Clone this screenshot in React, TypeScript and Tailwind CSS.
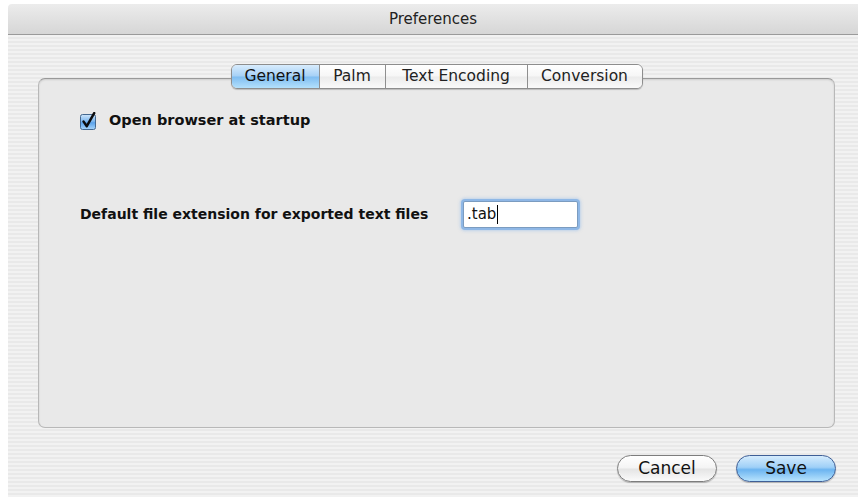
import React from "react";

const font = { fontFamily: '"DejaVu Sans", "Liberation Sans", sans-serif' };

function AquaCheck() {
  return (
    <svg width="17" height="18" viewBox="0 0 17 18">
      <defs>
        <linearGradient id="cbx" x1="0" y1="0" x2="0" y2="1">
          <stop offset="0" stopColor="#cfe6fb" />
          <stop offset="0.45" stopColor="#7fb8ef" />
          <stop offset="0.55" stopColor="#5aa2ea" />
          <stop offset="1" stopColor="#a9d6fb" />
        </linearGradient>
      </defs>
      <rect x="0.5" y="2.5" width="15" height="15" rx="2" fill="url(#cbx)" stroke="#44688f" />
      <path d="M3.6 9.6 L6.8 14.2 L14.2 1.2" fill="none" stroke="#0c0c0c" strokeWidth="2.5" strokeLinecap="round" strokeLinejoin="round" />
    </svg>
  );
}

export default function App() {
  const tabs = ["General", "Palm", "Text Encoding", "Conversion"];
  const widths = ["w-[87px]", "w-[66px]", "w-[142px]", "w-[115px]"];
  return (
    <div className="w-[858px] h-[497px] bg-white pl-[8px] pt-[4px] overflow-hidden" style={font}>
      <div className="flex flex-col h-full">
        <div className="h-[31px] shrink-0 flex items-center justify-center pt-[1px] rounded-tl-[4px] bg-[linear-gradient(to_bottom,#ececec,#d6d6d6)] border-b border-[#9a9a9a] text-[15px] text-[#222]">
          Preferences
        </div>
        <div className="flex-1 flex flex-col bg-[repeating-linear-gradient(to_bottom,#f2f2f2_0px,#f2f2f2_2px,#e9e9e9_2px,#e9e9e9_4px)]">
          <div className="mt-[43px] ml-[30px] mr-[23px] h-[350px] rounded-[7px] border border-[#b8b8b8] border-t-[#999] bg-[#e9e9e9] shadow-[inset_0_1px_2px_rgba(0,0,0,0.12)] flex flex-col">
            <div className="-mt-[15px] flex justify-center">
              <div className="flex h-[25px] rounded-[6px] border border-[#8d8d8d] overflow-hidden shadow-[0_1px_1px_rgba(0,0,0,0.2)] text-[15.5px]">
                {tabs.map((t, i) => (
                  <div
                    key={t}
                    className={
                      (i === 0
                        ? "bg-[linear-gradient(to_bottom,#d8ecfd_0%,#a6d1f6_48%,#7fbdf1_52%,#b3e0fc_100%)] text-[#111] "
                        : "bg-[linear-gradient(to_bottom,#ffffff_0%,#f6f6f6_48%,#ebebeb_52%,#fafafa_100%)] text-[#222] border-l border-[#8f8f8f] ") +
                      widths[i] +
                      " flex items-center justify-center pt-[1px]"
                    }
                  >
                    {t}
                  </div>
                ))}
              </div>
            </div>
            <div className="pl-[41px] pr-[20px] pt-[23px] flex flex-col">
              <div className="flex items-center gap-[12px] h-[18px]">
                <AquaCheck />
                <span className="text-[14.5px] font-bold text-[#111]">Open browser at startup</span>
              </div>
              <div className="mt-[69px] flex items-center h-[31px]">
                <span className="text-[14px] font-bold text-[#111] w-[383px]">Default file extension for exported text files</span>
                <div className="w-[115px] h-[27px] rounded-[2px] bg-white border border-[#7b9cc0] shadow-[0_0_0_2px_rgba(126,174,228,0.75),0_0_3px_3px_rgba(150,190,235,0.5)] flex items-center pl-[3px] text-[15px] text-[#111]">
                  .tab<span className="inline-block w-[1px] h-[19px] bg-black ml-[1px]" />
                </div>
              </div>
            </div>
          </div>
          <div className="mt-[27px] mr-[22px] flex justify-end gap-[19px]">
            <div className="w-[100px] h-[27px] rounded-full border border-[#7d7d7d] bg-[linear-gradient(to_bottom,#ffffff_0%,#f4f4f4_48%,#e4e4e4_52%,#fbfbfb_100%)] shadow-[0_1px_1px_rgba(0,0,0,0.25)] flex items-center justify-center text-[17px] text-[#111]">
              Cancel
            </div>
            <div className="w-[100px] h-[27px] rounded-full border border-[#3f5f96] bg-[linear-gradient(to_bottom,#d5ecfd_0%,#9fd0f7_45%,#6cb4f0_55%,#b7e3fd_100%)] shadow-[0_1px_1px_rgba(0,0,0,0.25)] flex items-center justify-center text-[17px] text-[#111]">
              Save
            </div>
          </div>
        </div>
      </div>
    </div>
  );
}
